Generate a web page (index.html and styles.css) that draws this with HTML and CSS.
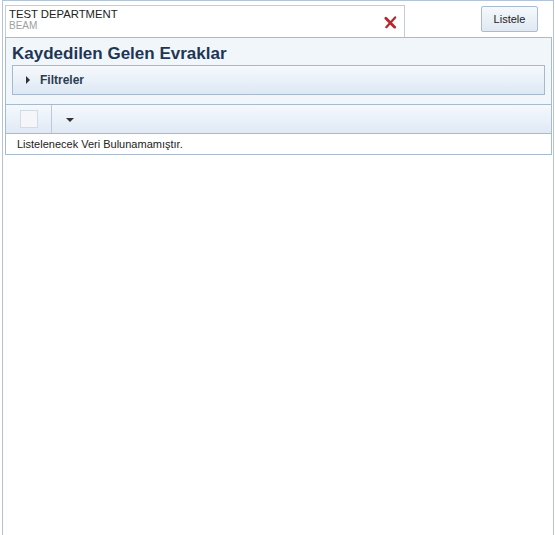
FILE: index.html
```html
<!DOCTYPE html>
<html lang="tr">

<head>
    <meta charset="UTF-8">
    <meta name="viewport" content="width=device-width, initial-scale=1.0">
    <title>Kaydedilen Gelen Evraklar</title>
    <link rel="stylesheet" href="styles.css">
</head>

<body>
    <div class="page">
        <div class="top-bar">
            <div class="dept-box">
                <div class="dept-text">
                    <div class="dept-name">TEST DEPARTMENT</div>
                    <div class="dept-sub">BEAM</div>
                </div>
                <svg class="clear-icon" width="13" height="13" viewBox="0 0 14 14">
                    <path d="M2 2.5 L11.5 12" stroke="#b8262e" stroke-width="3" stroke-linecap="round"/>
                    <path d="M12 1.5 L2.5 12" stroke="#b8262e" stroke-width="2.4" stroke-linecap="round"/>
                </svg>
            </div>
            <button class="list-btn">Listele</button>
        </div>

        <div class="panel">
            <h2 class="panel-title">Kaydedilen Gelen Evraklar</h2>
            <div class="filters">
                <span class="arrow-right"></span>
                <span class="filters-label">Filtreler</span>
            </div>

            <div class="grid-toolbar">
                <div class="check-cell">
                    <span class="checkbox"></span>
                </div>
                <div class="menu-cell">
                    <span class="arrow-down"></span>
                </div>
            </div>
            <div class="grid-row">Listelenecek Veri Bulunamamıştır.</div>
        </div>
    </div>
</body>

</html>
```

FILE: styles.css
```css
body {
    font-family: 'Liberation Sans', Arial, sans-serif;
    margin: 0;
    padding: 0;
    background-color: #fff;
    color: #333;
}

.page {
    margin: 0 1px 0 2px;
    height: 535px;
    box-sizing: border-box;
    border: 1px solid #b3c4d8;
    border-bottom: none;
    padding: 4px 0 0 2px;
}

.top-bar {
    display: flex;
    align-items: flex-start;
}

.dept-box {
    width: 400px;
    height: 32px;
    box-sizing: border-box;
    border: 1px solid #c2cdd9;
    border-bottom: none;
    background-color: #fff;
    display: flex;
    align-items: center;
    padding: 0 7px 0 3px;
}

.dept-text {
    flex: 1;
    margin-top: -5px;
}

.dept-name {
    font-size: 11.3px;
    line-height: 12px;
    color: #222;
}

.dept-sub {
    font-size: 10px;
    line-height: 10px;
    color: #a0a0a0;
    margin-top: 1px;
}

.clear-icon {
    margin-top: 2px;
}

.list-btn {
    margin: 1px 0 0 76px;
    width: 57px;
    height: 26px;
    font-family: 'Liberation Sans', Arial, sans-serif;
    font-size: 11px;
    color: #222;
    border: 1px solid #a9bcd1;
    border-radius: 2px;
    background: linear-gradient(#f6f9fc, #dfe8f3);
    padding: 0;
}

.panel {
    width: 547px;
    box-sizing: border-box;
    border: 1px solid #a8bacd;
    background-color: #f1f6fb;
}

.panel-title {
    margin: 0;
    padding: 5px 6px 0 6px;
    font-size: 17px;
    line-height: 22px;
    color: #1e3654;
}

.filters {
    margin: 0 6px 9px 6px;
    height: 30px;
    box-sizing: border-box;
    border: 1px solid #a7b9ce;
    background: linear-gradient(#f6f9fd, #dde8f4);
    display: flex;
    align-items: center;
    padding-left: 13px;
}

.arrow-right {
    width: 0;
    height: 0;
    border-top: 4px solid transparent;
    border-bottom: 4px solid transparent;
    border-left: 4px solid #333;
    margin-right: 10px;
}

.filters-label {
    font-size: 12px;
    font-weight: bold;
    color: #2b3d52;
}

.grid-toolbar {
    display: flex;
    height: 30px;
    box-sizing: border-box;
    border-top: 1px solid #a8bacd;
    border-bottom: 1px solid #a8bacd;
    background: linear-gradient(#f5f9fd, #dfe9f5);
}

.check-cell {
    width: 45px;
    border-right: 1px solid #bcc9d7;
    display: flex;
    align-items: center;
    justify-content: center;
}

.checkbox {
    width: 18px;
    height: 18px;
    box-sizing: border-box;
    border: 1px solid #d3dbe4;
    background-color: #f4f6f9;
}

.menu-cell {
    width: 38px;
    display: flex;
    align-items: center;
    justify-content: center;
}

.arrow-down {
    width: 0;
    height: 0;
    border-left: 4px solid transparent;
    border-right: 4px solid transparent;
    border-top: 4px solid #333;
    margin: 1px 3px 0 0;
}

.grid-row {
    background-color: #fff;
    height: 20px;
    font-size: 11px;
    line-height: 20px;
    padding-left: 11px;
    color: #222;
}
```
